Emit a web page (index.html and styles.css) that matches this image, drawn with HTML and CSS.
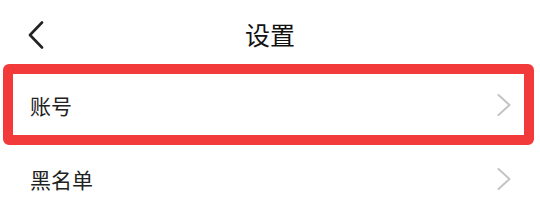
FILE: index.html
```html
<!DOCTYPE html>
<html lang="zh-CN">
<head>
    <meta charset="UTF-8">
    <meta name="viewport" content="width=device-width, initial-scale=1.0">
    <title>设置</title>
    <link rel="stylesheet" href="styles.css">
</head>
<body>
    <div class="page">
        <div class="header">
            <div class="back">
                <svg width="16" height="28" viewBox="0 0 16 28">
                    <path d="M14 1.5 L2 14 L14 26.5" fill="none" stroke="#222" stroke-width="2.6" stroke-linecap="round" stroke-linejoin="round"/>
                </svg>
            </div>
            <h2 class="title">设置</h2>
            <div class="spacer"></div>
        </div>

        <div class="list">
            <div class="row marked">
                <span class="label">账号</span>
                <svg class="arrow" width="14" height="22" viewBox="0 0 14 22">
                    <path d="M1.5 1 L12.5 11 L1.5 21" fill="none" stroke="#c4c4c4" stroke-width="2" stroke-linecap="round" stroke-linejoin="round"/>
                </svg>
            </div>
            <div class="row">
                <span class="label">黑名单</span>
                <svg class="arrow" width="14" height="22" viewBox="0 0 14 22">
                    <path d="M1.5 1 L12.5 11 L1.5 21" fill="none" stroke="#c4c4c4" stroke-width="2" stroke-linecap="round" stroke-linejoin="round"/>
                </svg>
            </div>
        </div>
    </div>
</body>
</html>
```

FILE: styles.css
```css
body {
    margin: 0;
    background: #fff;
    font-family: "Noto Sans CJK SC", "Noto Sans", sans-serif;
    color: #222;
}

.page {
    width: 540px;
    height: 214px;
    overflow: hidden;
}

.header {
    height: 68px;
    display: grid;
    grid-template-columns: 80px 1fr 80px;
    align-items: center;
}

.back {
    display: flex;
    align-items: center;
    padding-left: 28px;
    padding-top: 1px;
}

.title {
    margin: 0;
    text-align: center;
    font-size: 25px;
    font-weight: normal;
    color: #111;
}

.list {
    display: flex;
    flex-direction: column;
}

.row {
    height: 74px;
    padding: 0 29px 0 30px;
    display: flex;
    align-items: center;
    justify-content: space-between;
    box-sizing: border-box;
    position: relative;
}

.label {
    font-size: 21px;
    color: #222;
}

/* annotation box round the first row */
.marked::after {
    content: "";
    position: absolute;
    left: 3px;
    right: 6px;
    top: -4px;
    bottom: -3px;
    border: 10px solid #f33a3a;
    border-radius: 6px;
}
```
